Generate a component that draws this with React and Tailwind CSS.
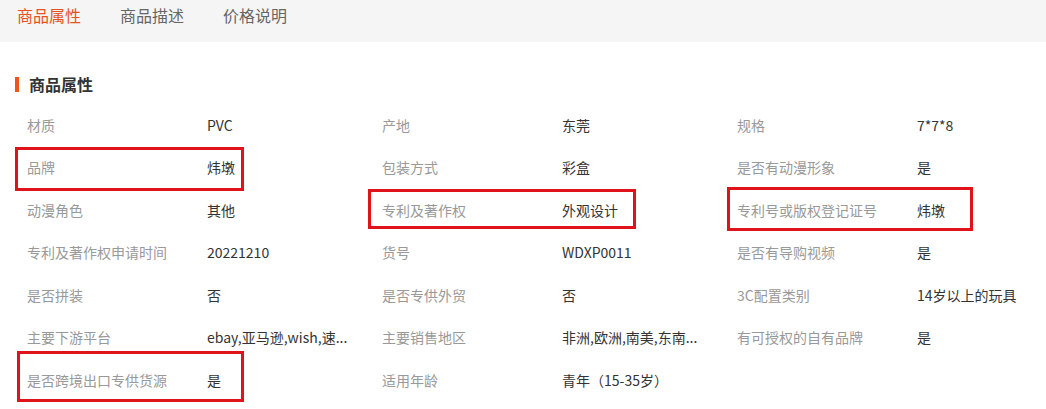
import React from "react";

const rows = [
  [["材质", "PVC"], ["产地", "东莞"], ["规格", "7*7*8"]],
  [["品牌", "炜墩"], ["包装方式", "彩盒"], ["是否有动漫形象", "是"]],
  [["动漫角色", "其他"], ["专利及著作权", "外观设计"], ["专利号或版权登记证号", "炜墩"]],
  [["专利及著作权申请时间", "20221210"], ["货号", "WDXP0011"], ["是否有导购视频", "是"]],
  [["是否拼装", "否"], ["是否专供外贸", "否"], ["3C配置类别", "14岁以上的玩具"]],
  [
    ["主要下游平台", "ebay,亚马逊,wish,速..."],
    ["主要销售地区", "非洲,欧洲,南美,东南..."],
    ["有可授权的自有品牌", "是"],
  ],
  [["是否跨境出口专供货源", "是"], ["适用年龄", "青年（15-35岁）"], null],
];

const tabs = ["商品属性", "商品描述", "价格说明"];

function App() {
  return (
    <div
      className="relative w-[1046px] h-[409px] overflow-hidden bg-white"
      style={{ fontFamily: '"Noto Sans CJK SC", "Noto Sans", sans-serif' }}
    >
      {/* tab bar */}
      <div className="flex h-[42px] gap-[39px] bg-[#f5f5f5] pl-[17px]">
        {tabs.map((t, i) => (
          <div
            key={t}
            className={
              i === 0
                ? "text-[16px] leading-[31px] text-[#e4541e]"
                : "text-[16px] leading-[31px] text-[#666]"
            }
          >
            {t}
          </div>
        ))}
      </div>

      {/* section title */}
      <div className="mt-[30px] flex h-[24px] items-center pl-[15px]">
        <span className="h-[15px] w-[4px] bg-[#f1531d]" />
        <span className="ml-[10px] text-[16px] font-bold text-[#333]">商品属性</span>
      </div>

      {/* attributes */}
      <div className="mt-[8px] pl-[27px]">
        {rows.map((row, r) => (
          <div key={r} className="flex h-[42.5px] items-center">
            {row.map((cell, c) =>
              cell ? (
                <div key={c} className="flex w-[355px] shrink-0 items-center text-[14px]">
                  <span className="w-[180px] shrink-0 whitespace-nowrap text-[#999]">{cell[0]}</span>
                  <span className="whitespace-nowrap text-[#333]">{cell[1]}</span>
                </div>
              ) : (
                <div key={c} className="w-[355px] shrink-0" />
              )
            )}
          </div>
        ))}
      </div>

      {/* annotation boxes */}
      <div className="absolute left-[15px] top-[147px] h-[44px] w-[229px] border-[3px] border-[#e0121a]" />
      <div className="absolute left-[368px] top-[189px] h-[40px] w-[268px] border-[3px] border-[#e0121a]" />
      <div className="absolute left-[727px] top-[187px] h-[44px] w-[246px] border-[3px] border-[#e0121a]" />
      <div className="absolute left-[17px] top-[351px] h-[51px] w-[227px] border-[3px] border-[#e0121a]" />
    </div>
  );
}

export default App;
